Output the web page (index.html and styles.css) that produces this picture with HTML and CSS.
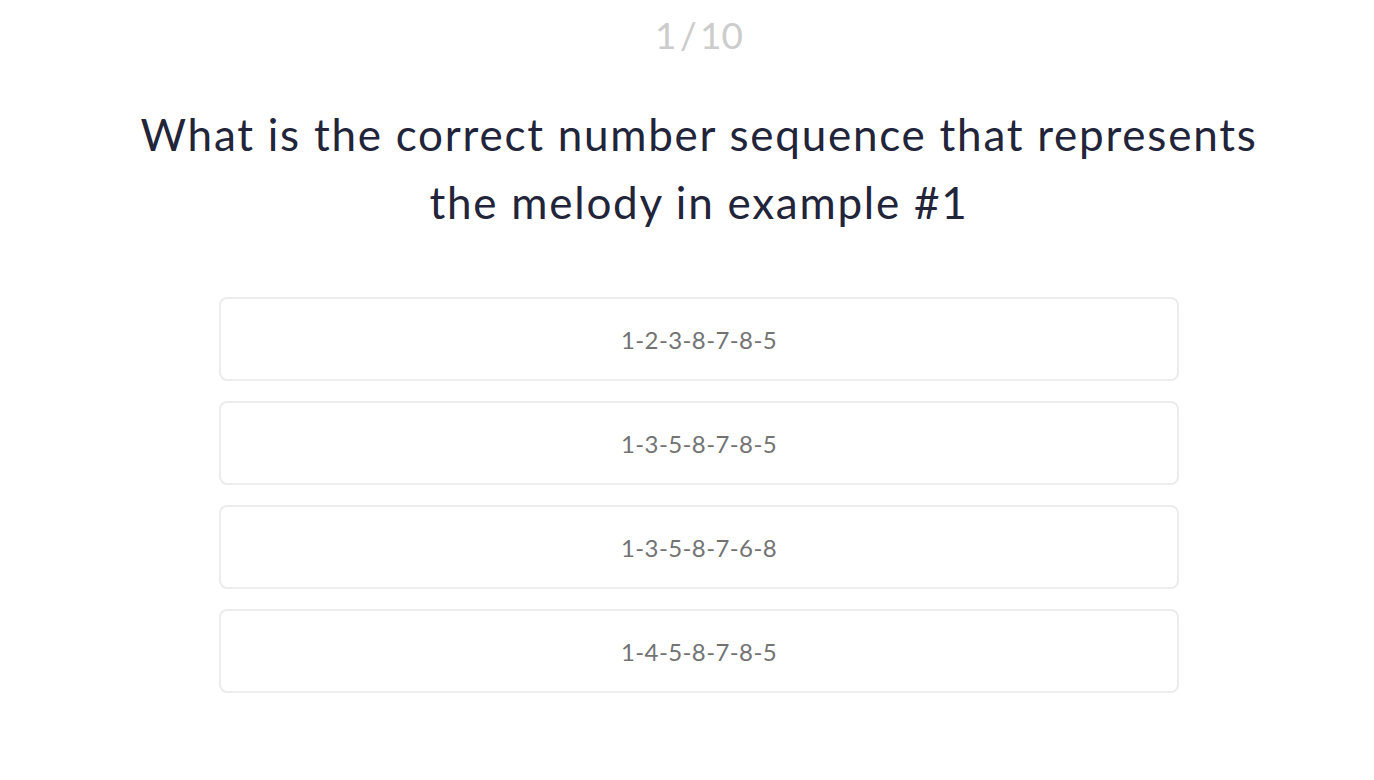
FILE: index.html
```html
<!DOCTYPE html>
<html lang="en">
<head>
    <meta charset="UTF-8">
    <meta name="viewport" content="width=device-width, initial-scale=1.0">
    <title>Quiz</title>
    <link rel="stylesheet" href="styles.css">
</head>
<body>
    <div class="quiz">
        <div class="counter">1 / 10</div>
        <h1 class="question">What is the correct number sequence that represents the melody in example #1</h1>
        <div class="options">
            <button class="option">1-2-3-8-7-8-5</button>
            <button class="option">1-3-5-8-7-8-5</button>
            <button class="option">1-3-5-8-7-6-8</button>
            <button class="option">1-4-5-8-7-8-5</button>
        </div>
    </div>
</body>
</html>
```

FILE: styles.css
```css
body {
    font-family: 'Lato', 'Liberation Sans', sans-serif;
    background-color: #ffffff;
    margin: 0;
}
.quiz {
    display: flex;
    flex-direction: column;
    align-items: center;
    padding: 12px 0 0 24px;
}
.counter {
    font-size: 37px;
    color: #cccccc;
    line-height: 46px;
    word-spacing: -6px;
}
.question {
    font-size: 44px;
    font-weight: 400;
    color: #22243a;
    text-align: center;
    line-height: 68px;
    letter-spacing: 1.75px;
    max-width: 1150px;
    margin: 42px 0 0 0;
}
.options {
    display: flex;
    flex-direction: column;
    gap: 20px;
    width: 960px;
    margin-top: 61px;
}
.option {
    height: 84px;
    background-color: #ffffff;
    border: 2px solid #ececec;
    border-radius: 8px;
    font-family: inherit;
    font-size: 24px;
    letter-spacing: 0.4px;
    color: #737373;
    cursor: pointer;
}
```
